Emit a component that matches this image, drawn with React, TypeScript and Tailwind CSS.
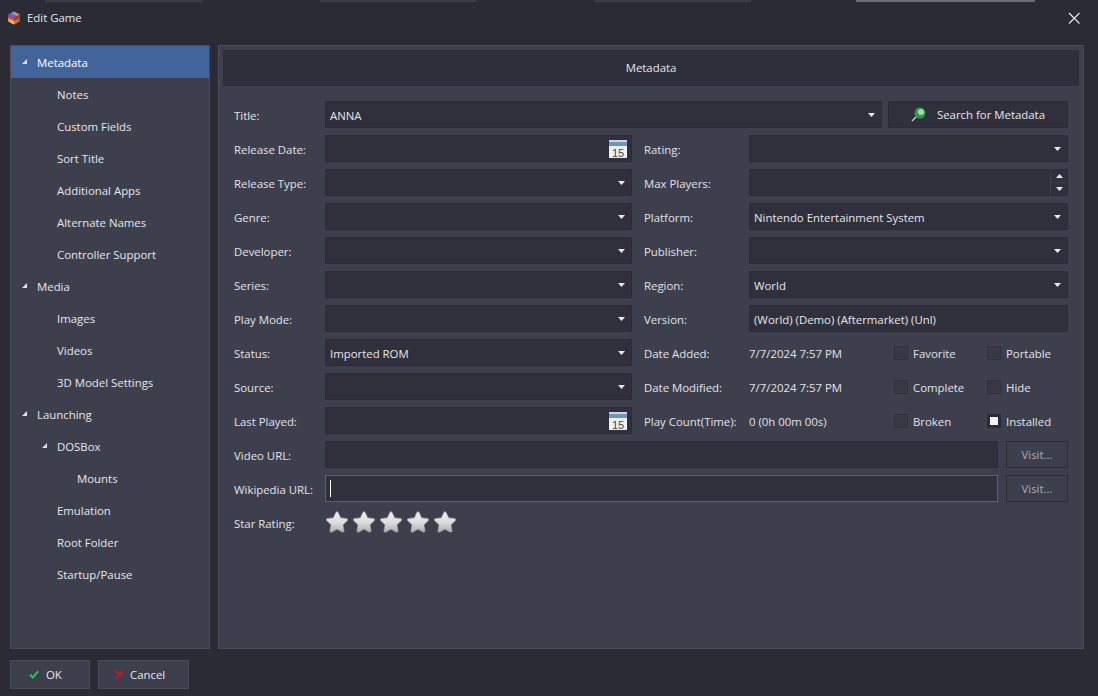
import React from "react";

const font = { fontFamily: '"Open Sans", "Noto Sans", sans-serif' };

function Arrow({ up }: { up?: boolean }) {
  return (
    <svg width="7" height="4" viewBox="0 0 7 4" className="shrink-0">
      <polygon points={up ? "3.5,0 7,4 0,4" : "0,0 7,0 3.5,4"} fill="#e8e9ee" />
    </svg>
  );
}

function TreeArrow() {
  return (
    <svg width="5" height="5" viewBox="0 0 5 5" className="absolute left-[-15px] top-[13px]">
      <polygon points="5,0 5,5 0,5" fill="#dfe0e6" />
    </svg>
  );
}

function TreeItem({ label, level = 0, open, active }: { label: string; level?: number; open?: boolean; active?: boolean }) {
  const pad = level === 0 ? "pl-[26px]" : level === 1 ? "pl-[46px]" : "pl-[66px]";
  return (
    <div className={`h-8 flex items-center ${pad} text-[11.4px] ${active ? "bg-[#41659a] text-white" : "text-[#e6e7ec]"}`}>
      <span className="relative leading-[34px] h-8">
        {open && <TreeArrow />}
        {label}
      </span>
    </div>
  );
}

function Label({ children, w }: { children: React.ReactNode; w: string }) {
  return <div className={`${w} shrink-0 text-[11.4px] leading-[29px] h-[27px] text-[#e2e3e9] whitespace-nowrap`}>{children}</div>;
}

function Field({ value, arrow, calendar, focus, className = "" }: { value?: string; arrow?: boolean; calendar?: boolean; focus?: boolean; className?: string }) {
  return (
    <div className={`h-[27px] flex items-center pl-[4px] pr-[6px] text-[11.4px] text-[#e6e7ec] bg-[#2f303b] border ${focus ? "border-[#45678d]" : "border-[#2b2c36]"} ${className}`}>
      {focus && <div className="w-px h-[17px] bg-white" />}
      <span className="flex-1 whitespace-nowrap leading-[27px] h-[25px]">{value}</span>
      {arrow && <Arrow />}
      {calendar && <CalendarIcon />}
    </div>
  );
}

function CalendarIcon() {
  return (
    <svg width="18" height="18" viewBox="0 0 18 18" className="shrink-0 mr-[-2px]">
      <rect x="0" y="0" width="18" height="18" fill="#eef1f3" />
      <rect x="0" y="0" width="18" height="2" fill="#c9d6e0" />
      <rect x="0" y="2" width="18" height="4" fill="#6e97bb" />
      <text x="9" y="16.5" textAnchor="middle" fontSize="11" fontFamily="Liberation Sans" fill="#3d4650">15</text>
    </svg>
  );
}

function Check({ label, checked, w }: { label: string; checked?: boolean; w: string }) {
  return (
    <div className={`${w} flex items-center gap-[5px] shrink-0`}>
      <div className={`w-[14px] h-[14px] border flex items-center justify-center ${checked ? "bg-[#2a2b35] border-[#2a2b35]" : "bg-[#383945] border-[#30313b]"}`}>
        {checked && <div className="w-2 h-2 bg-[#f2f2f6]" />}
      </div>
      <span className="text-[11.4px] leading-[29px] h-[27px] text-[#e2e3e9]">{label}</span>
    </div>
  );
}

function Row({ children }: { children: React.ReactNode }) {
  return <div className="h-[27px] flex items-center shrink-0">{children}</div>;
}

function Star() {
  const d = "M12 3 L14.9 8.9 L21.4 9.8 L16.7 14.4 L17.8 20.9 L12 17.8 L6.2 20.9 L7.3 14.4 L2.6 9.8 L9.1 8.9 Z";
  return (
    <svg width="24" height="24" viewBox="0 0 24 24" className="shrink-0">
      <defs>
        <linearGradient id="starfill" x1="0" y1="0" x2="0" y2="1">
          <stop offset="0" stopColor="#ededed" />
          <stop offset="0.55" stopColor="#dcdcdc" />
          <stop offset="1" stopColor="#b4b4b4" />
        </linearGradient>
      </defs>
      <path d={d} fill="#8f8f92" stroke="#8f8f92" strokeWidth="3.4" strokeLinejoin="round" />
      <path d={d} fill="url(#starfill)" stroke="url(#starfill)" strokeWidth="1.8" strokeLinejoin="round" />
    </svg>
  );
}

function Logo() {
  return (
    <svg width="14" height="14" viewBox="0 0 14 14" className="shrink-0">
      <polygon points="7,0.5 12.8,3.6 7,6.8 1.2,3.6" fill="#4f6fc4" />
      <polygon points="7,0.5 9.9,2 7,3.7 4.1,2" fill="#8f97c9" />
      <polygon points="9.9,2.1 12.8,3.6 10,5.2 7.2,3.6" fill="#d9875e" />
      <polygon points="1.2,3.6 7,6.8 7,13.5 1.2,10.4" fill="#c9407e" />
      <polygon points="1.2,7 4,8.6 4,12 1.2,10.4" fill="#e3b02c" />
      <polygon points="4,8.6 7,10.2 7,13.5 4,12" fill="#e8d23a" />
      <polygon points="12.8,3.6 7,6.8 7,13.5 12.8,10.4" fill="#c4342f" />
      <polygon points="12.8,7 10,8.6 10,12 12.8,10.4" fill="#3f9b55" />
      <polygon points="10,8.6 7,10.2 7,13.5 10,12" fill="#d8732c" />
    </svg>
  );
}

function Magnifier() {
  return (
    <svg width="15" height="15" viewBox="0 0 15 15" className="shrink-0">
      <line x1="1" y1="14" x2="6" y2="9" stroke="#b9d4bb" strokeWidth="1.5" />
      <circle cx="9" cy="6" r="5.5" fill="#2e9a4c" />
      <circle cx="10" cy="5" r="3" fill="#a6dbad" />
    </svg>
  );
}

function Visit() {
  return (
    <div className="w-[62px] ml-2 h-[27px] bg-[#3d3f4c] border border-[#2b2c36] flex items-center justify-center text-[11.4px] leading-[27px] text-[#a9abb5]">Visit...</div>
  );
}

function App() {
  const tree: [string, number, boolean?, boolean?][] = [
    ["Metadata", 0, true, true],
    ["Notes", 1],
    ["Custom Fields", 1],
    ["Sort Title", 1],
    ["Additional Apps", 1],
    ["Alternate Names", 1],
    ["Controller Support", 1],
    ["Media", 0, true],
    ["Images", 1],
    ["Videos", 1],
    ["3D Model Settings", 1],
    ["Launching", 0, true],
    ["DOSBox", 1, true],
    ["Mounts", 2],
    ["Emulation", 1],
    ["Root Folder", 1],
    ["Startup/Pause", 1],
  ];
  const L = "w-[91px]";
  const R = "w-[105px] ml-3";
  const F = "w-[307px]";
  const G = "flex-1";
  const V = "w-[145px] shrink-0 text-[11.4px] leading-[29px] h-[27px] text-[#e2e3e9]";
  return (
    <div style={font} className="w-[1098px] h-[696px] bg-[#2a2b35] flex flex-col overflow-hidden text-[#e6e7ec]">
      <div className="h-[2px] flex shrink-0">
        <div className="w-[45px]" />
        <div className="w-[157px] bg-[#3b3c46]" />
        <div className="w-[118px]" />
        <div className="w-[156px] bg-[#3b3c46]" />
        <div className="w-[118px]" />
        <div className="w-[157px] bg-[#3b3c46]" />
        <div className="w-[105px]" />
        <div className="w-[179px] bg-[#6b6c74]" />
      </div>
      <div className="h-[31px] flex items-center pl-[7px] pr-[17px] shrink-0">
        <Logo />
        <span className="ml-[6px] text-[11.4px] text-[#e6e7ec]">Edit Game</span>
        <div className="flex-1" />
        <svg width="14" height="14" viewBox="0 0 14 14">
          <path d="M2 2 L12.5 12.5 M12.5 2 L2 12.5" stroke="#e8e8ee" strokeWidth="1.1" />
        </svg>
      </div>
      <div className="h-[604px] mt-3 flex pl-[10px] gap-2 shrink-0 w-[1084px]">
        <div className="w-[200px] bg-[#3d3f4c] border border-[#494b58] shrink-0">
          {tree.map(([label, level, open, active]) => (
            <TreeItem key={label} label={label} level={level} open={open} active={active} />
          ))}
        </div>
        <div className="flex-1 bg-[#3d3f4c] border border-[#494b58] p-1 flex flex-col">
          <div className="h-[36px] bg-[#2e2f3a] flex items-center justify-center text-[11.4px] leading-[38px] shrink-0">Metadata</div>
          <div className="flex flex-col gap-[7px] pt-[15px] px-[11px]">
            <Row>
              <Label w={L}>Title:</Label>
              <Field value="ANNA" arrow className="w-[557px]" />
              <div className="flex-1 ml-[6px] h-[27px] bg-[#2f303b] border border-[#2b2c36] flex items-center justify-center gap-[11px] text-[11.4px] leading-[27px]">
                <Magnifier />
                <span>Search for Metadata</span>
              </div>
            </Row>
            <Row>
              <Label w={L}>Release Date:</Label>
              <Field calendar className={F} />
              <Label w={R}>Rating:</Label>
              <Field arrow className={G} />
            </Row>
            <Row>
              <Label w={L}>Release Type:</Label>
              <Field arrow className={F} />
              <Label w={R}>Max Players:</Label>
              <div className="flex-1 h-[27px] bg-[#2f303b] border border-[#2b2c36] flex justify-end">
                <div className="w-[17px] border-l border-[#3d3f4c] flex flex-col">
                  <div className="flex-1 flex items-center justify-center border-b border-[#3d3f4c]"><Arrow up /></div>
                  <div className="flex-1 flex items-center justify-center"><Arrow /></div>
                </div>
              </div>
            </Row>
            <Row>
              <Label w={L}>Genre:</Label>
              <Field arrow className={F} />
              <Label w={R}>Platform:</Label>
              <Field value="Nintendo Entertainment System" arrow className={G} />
            </Row>
            <Row>
              <Label w={L}>Developer:</Label>
              <Field arrow className={F} />
              <Label w={R}>Publisher:</Label>
              <Field arrow className={G} />
            </Row>
            <Row>
              <Label w={L}>Series:</Label>
              <Field arrow className={F} />
              <Label w={R}>Region:</Label>
              <Field value="World" arrow className={G} />
            </Row>
            <Row>
              <Label w={L}>Play Mode:</Label>
              <Field arrow className={F} />
              <Label w={R}>Version:</Label>
              <Field value="(World) (Demo) (Aftermarket) (Unl)" className={G} />
            </Row>
            <Row>
              <Label w={L}>Status:</Label>
              <Field value="Imported ROM" arrow className={F} />
              <Label w={R}>Date Added:</Label>
              <div className={V}>7/7/2024 7:57 PM</div>
              <Check label="Favorite" w="w-[93px]" />
              <Check label="Portable" w="w-[81px]" />
            </Row>
            <Row>
              <Label w={L}>Source:</Label>
              <Field arrow className={F} />
              <Label w={R}>Date Modified:</Label>
              <div className={V}>7/7/2024 7:57 PM</div>
              <Check label="Complete" w="w-[93px]" />
              <Check label="Hide" w="w-[81px]" />
            </Row>
            <Row>
              <Label w={L}>Last Played:</Label>
              <Field calendar className={F} />
              <Label w={R}>Play Count(Time):</Label>
              <div className={V}>0 (0h 00m 00s)</div>
              <Check label="Broken" w="w-[93px]" />
              <Check label="Installed" checked w="w-[81px]" />
            </Row>
            <Row>
              <Label w={L}>Video URL:</Label>
              <Field className="flex-1" />
              <Visit />
            </Row>
            <Row>
              <Label w={L}>Wikipedia URL:</Label>
              <Field focus className="flex-1" />
              <Visit />
            </Row>
            <Row>
              <Label w={L}>Star Rating:</Label>
              <div className="flex gap-[3px] -mt-[2px]">
                <Star /><Star /><Star /><Star /><Star />
              </div>
            </Row>
          </div>
        </div>
      </div>
      <div className="flex gap-2 pl-[10px] mt-[11px]">
        <div className="w-[80px] h-[29px] bg-[#3d3f4c] border border-[#494b58] flex items-center pl-[18px] gap-[7px] text-[11.4px] leading-[29px]">
          <svg width="10" height="9" viewBox="0 0 10 9" className="shrink-0">
            <path d="M1 4.5 L3.8 7.5 L9.2 1.2" fill="none" stroke="#35b25a" strokeWidth="2.2" />
          </svg>
          <span>OK</span>
        </div>
        <div className="w-[91px] h-[29px] bg-[#3d3f4c] border border-[#494b58] flex items-center pl-[14px] gap-[7px] text-[11.4px] leading-[29px]">
          <svg width="10" height="10" viewBox="0 0 10 10" className="shrink-0">
            <path d="M1.5 1 L9 5.2 M9 1.5 L3 9" fill="none" stroke="#ad1f2b" strokeWidth="2.4" />
          </svg>
          <span>Cancel</span>
        </div>
      </div>
    </div>
  );
}

export default App;
